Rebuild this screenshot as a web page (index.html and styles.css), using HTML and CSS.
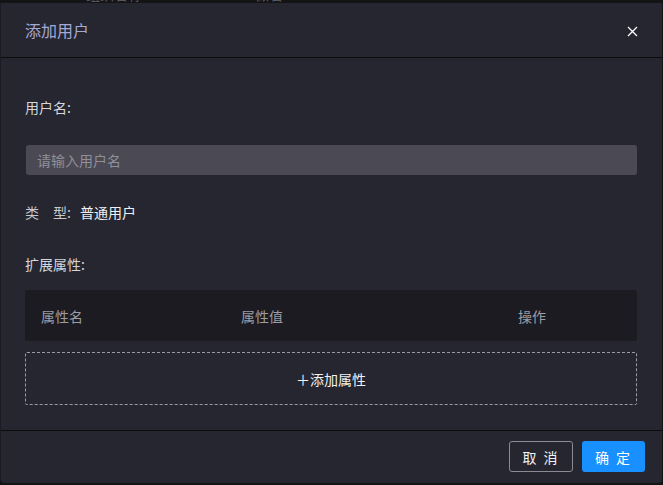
FILE: index.html
```html
<!DOCTYPE html>
<html lang="zh-CN">
<head>
<meta charset="utf-8">
<title>添加用户</title>
<link rel="stylesheet" href="styles.css">
</head>
<body>
<div class="backdrop">
  <div class="backdrop-row"><span class="bg-col1">组织名称</span><span class="bg-col2">做名</span></div>
</div>
<div class="dialog">
  <div class="dialog-header">
    <span class="dialog-title">添加用户</span>
    <button class="close-btn" aria-label="关闭">
      <svg width="11" height="11" viewBox="0 0 11 11"><path d="M1 1L10 10M10 1L1 10" stroke="#ffffff" stroke-width="1.3" fill="none"/></svg>
    </button>
  </div>
  <div class="dialog-body">
    <div class="field-label label-user">用户名:</div>
    <input class="text-input" type="text" placeholder="请输入用户名">
    <div class="type-row"><span class="type-label">类<span class="gap"></span>型:</span><span class="type-value">普通用户</span></div>
    <div class="field-label label-ext">扩展属性:</div>
    <div class="table-head">
      <span class="th th-name">属性名</span>
      <span class="th th-value">属性值</span>
      <span class="th th-op">操作</span>
    </div>
    <div class="add-attr">＋添加属性</div>
  </div>
  <div class="dialog-footer">
    <button class="btn btn-cancel">取 消</button>
    <button class="btn btn-ok">确 定</button>
  </div>
</div>
</body>
</html>
```
FILE: styles.css
```css
* { box-sizing: border-box; }
html, body {
  margin: 0;
  padding: 0;
  background: #141417;
  font-family: "Noto Sans CJK SC", "Noto Sans", sans-serif;
  font-size: 14px;
  width: 663px;
  height: 485px;
  overflow: hidden;
}
.backdrop {
  height: 3px;
  overflow: hidden;
  position: relative;
}
.backdrop-row {
  display: flex;
  margin-top: -14px;
  line-height: 16px;
  color: #55565e;
  font-size: 14px;
}
.bg-col1 { margin-left: 86px; }
.bg-col2 { margin-left: 113px; }
.dialog {
  width: 662px;
  height: 480px;
  background: #252630;
  border-left: 1px solid #1a1a20;
  border-radius: 0 0 4px 4px;
  display: flex;
  flex-direction: column;
}
.dialog-header {
  height: 55px;
  border-bottom: 1px solid #0c0c0f;
  display: flex;
  align-items: center;
  justify-content: space-between;
  padding: 0 24px 0 24px;
  flex: none;
}
.dialog-title {
  color: #a6a9d6;
  font-size: 16px;
  line-height: 22px;
}
.close-btn {
  background: none;
  border: none;
  padding: 0;
  margin-top: 3px;
  width: 11px;
  height: 11px;
  display: flex;
}
.dialog-body {
  padding: 0 25px 0 24px;
  height: 373px;
  flex: none;
  border-bottom: 1px solid #0c0c0f;
}
.field-label {
  color: #d6d6dc;
  line-height: 20px;
}
.label-user { margin-top: 39px; }
.text-input {
  display: block;
  width: 611px;
  height: 30px;
  margin-top: 28px;
  margin-left: 1px;
  background: #4a4954;
  border: none;
  border-radius: 3px;
  padding: 0 11px;
  color: #eee;
  font-family: inherit;
  font-size: 14px;
  outline: none;
}
.text-input::placeholder { color: #8f8f99; }
.type-row {
  margin-top: 27px;
  line-height: 20px;
  display: flex;
}
.type-label { color: #c8c8ce; }
.gap { display: inline-block; width: 14px; }
.type-value { color: #f0f0f4; margin-left: 9px; }
.label-ext { margin-top: 32px; }
.table-head {
  margin-top: 16px;
  width: 612px;
  height: 51px;
  background: #1b1b21;
  border-radius: 2px;
  display: grid;
  grid-template-columns: 200px 277px 1fr;
  align-items: center;
  padding-left: 16px;
}
.th { color: #9c9ca5; }
.add-attr {
  margin-top: 11px;
  width: 612px;
  height: 53px;
  border: 1px dashed #9a9aa2;
  border-radius: 2px;
  display: flex;
  align-items: center;
  justify-content: center;
  color: #f2f2f5;
}
.dialog-footer {
  display: flex;
  justify-content: flex-end;
  gap: 9px;
  padding: 10px 17px 0 0;
}
.btn {
  height: 31px;
  border-radius: 3px;
  font-family: inherit;
  font-size: 14px;
  padding: 0;
  letter-spacing: 2px;
}
.btn-cancel {
  width: 64px;
  background: transparent;
  border: 1px solid #8a8a92;
  color: #f2f2f5;
}
.btn-ok {
  width: 63px;
  background: #1890ff;
  border: none;
  color: #ffffff;
}
```
